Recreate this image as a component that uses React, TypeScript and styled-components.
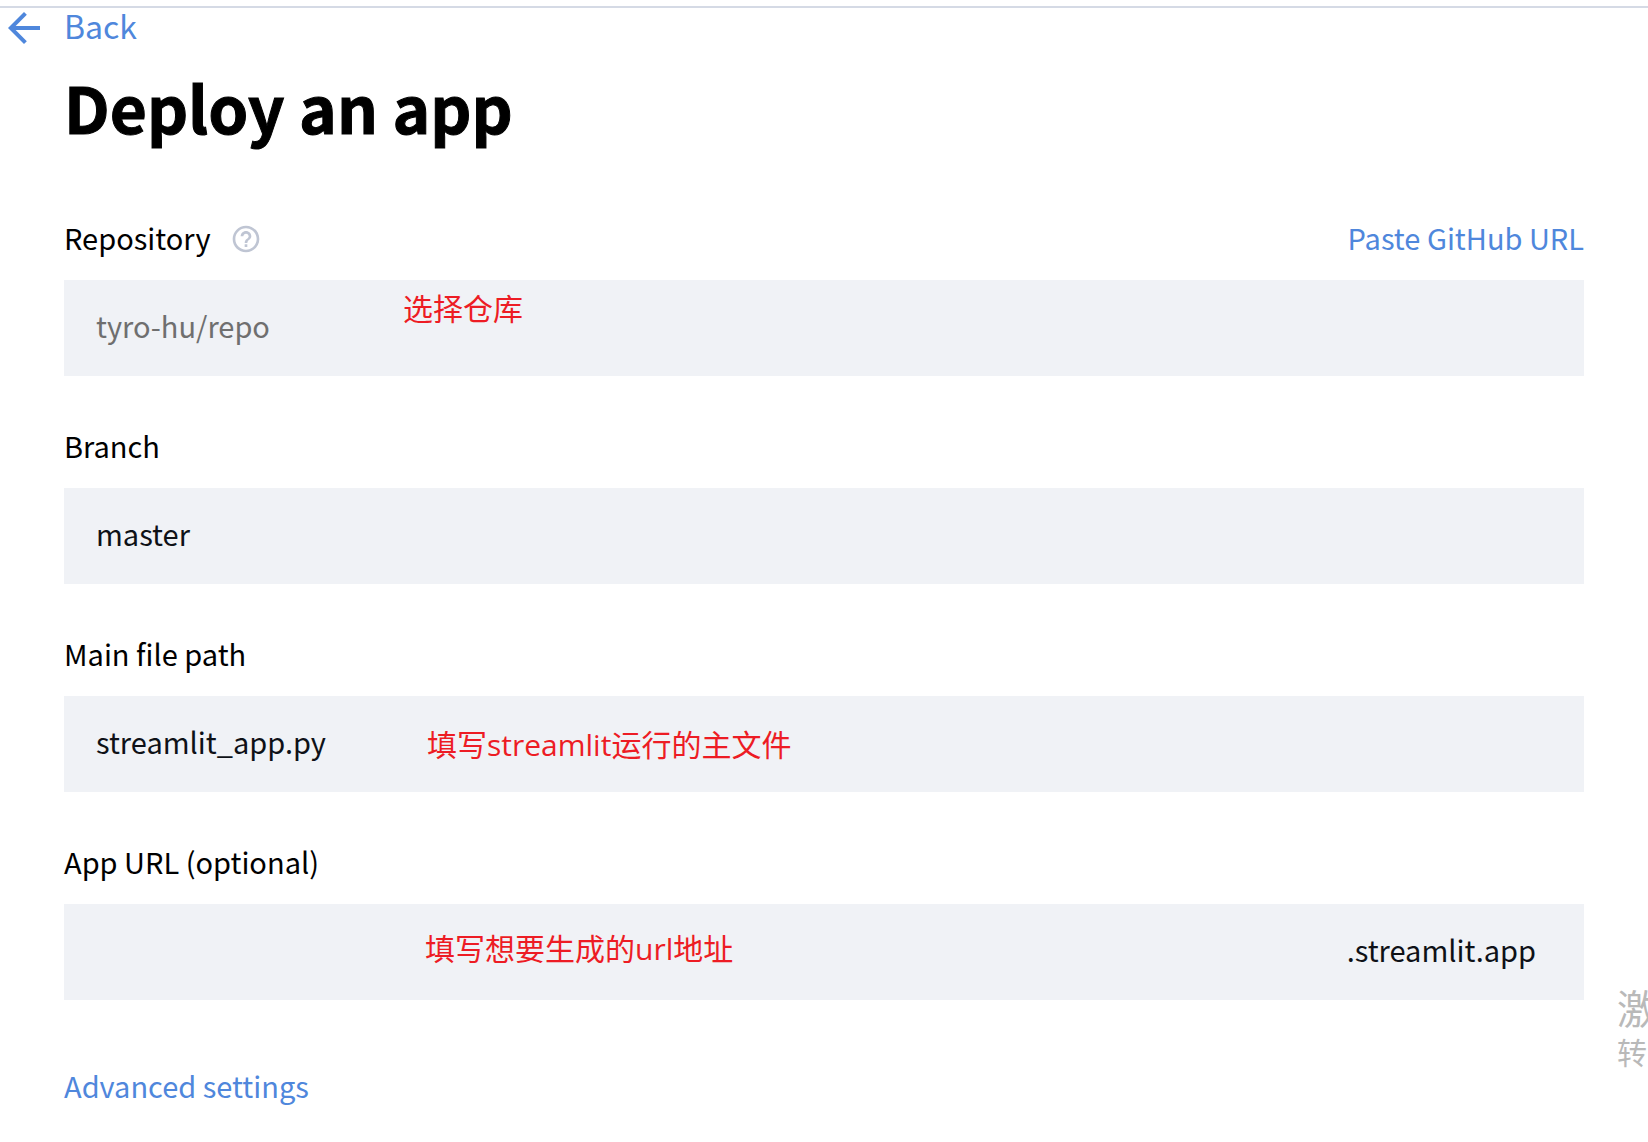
import React from 'react';
import styled, { createGlobalStyle } from 'styled-components';

const latin = `"Noto Sans CJK SC", "Source Sans Pro", sans-serif`;
const handNote = `"Open Sans", "Noto Sans CJK SC", sans-serif`;
const blue = '#4f87dc';

const GlobalStyle = createGlobalStyle`
  *, *::before, *::after { box-sizing: border-box; }
  body { margin: 0; background: #fff; color: #000; font-family: ${latin}; }
`;

const Page = styled.div`
  position: relative;
  min-height: 100vh;
  padding-top: 6px;
  overflow: hidden;
`;

const TopBar = styled.nav`
  display: flex;
  border-top: 2px solid #d5dae5;
  padding-left: 8px;
`;

const BackLink = styled.a`
  display: flex;
  align-items: flex-start;
  gap: 24px;
  height: 36px;
  color: ${blue};
  font-size: 32px;
  line-height: 34px;
  text-decoration: none;

  svg { align-self: flex-end; width: 32px; height: 32px; }
`;

const Content = styled.main`
  padding: 0 64px;
`;

const Title = styled.h1`
  margin: 22px 0 73px;
  font-size: 64px;
  line-height: 80px;
  font-weight: 700;
  -webkit-text-stroke: 1px currentColor;
`;

const Form = styled.form`
  display: flex;
  flex-direction: column;
  gap: 51px;
`;

const Field = styled.div`
  position: relative;
  display: flex;
  flex-direction: column;
  gap: 25px;
`;

const LabelRow = styled.div`
  display: flex;
  align-items: center;
  height: 36px;
  font-size: 29px;
  line-height: 36px;
`;

const HelpButton = styled.button`
  display: flex;
  margin: 4px auto 0 19px;
  padding: 0;
  border: 0;
  background: none;
  color: #bfc5d3;

  svg { width: 32px; height: 32px; }
`;

const TextLink = styled.a`
  color: ${blue};
  font-size: 29px;
  line-height: 36px;
  text-decoration: none;
`;

const InputBox = styled.div`
  display: flex;
  align-items: center;
  height: 96px;
  padding: 0 48px 6px 32px;
  background: #f0f2f6;
  color: #0e1117;
  font-size: 29px;
  line-height: 44px;
`;

const Input = styled.input`
  flex: 1;
  min-width: 0;
  height: 44px;
  padding: 0;
  border: 0;
  outline: 0;
  background: transparent;
  color: inherit;
  font: inherit;

  &::placeholder { color: #6f6f6f; opacity: 1; }
`;

const Note = styled.span<{ $left: number; $top: number }>`
  position: absolute;
  left: ${(p) => p.$left}px;
  top: ${(p) => p.$top}px;
  color: #ed1c24;
  font-family: ${handNote};
  font-size: 30px;
  line-height: 40px;
  white-space: nowrap;
  pointer-events: none;
`;

const Footer = styled.div`
  display: flex;
  padding-top: 67px;
`;

const Watermark = styled.div`
  position: absolute;
  left: calc(100% - 31px);
  top: 983px;
  color: #b9b9b9;
  white-space: nowrap;
  pointer-events: none;
`;

const WatermarkTitle = styled.div`
  font-size: 40px;
  line-height: 48px;
`;

const WatermarkText = styled.div`
  font-size: 30px;
  line-height: 40px;
`;

type FieldProps = {
  id: string;
  label: string;
  value?: string;
  placeholder?: string;
  suffix?: string;
  note?: { text: string; left: number; top: number };
  children?: React.ReactNode;
};

function TextField({ id, label, value, placeholder, suffix, note, children }: FieldProps) {
  return (
    <Field>
      <LabelRow>
        <label htmlFor={id}>{label}</label>
        {children}
      </LabelRow>
      <InputBox>
        <Input id={id} type="text" defaultValue={value} placeholder={placeholder} />
        {suffix && <span>{suffix}</span>}
      </InputBox>
      {note && <Note $left={note.left} $top={note.top}>{note.text}</Note>}
    </Field>
  );
}

export default function App() {
  return (
    <Page>
      <GlobalStyle />
      <TopBar>
        <BackLink href="#">
          <svg viewBox="4 4 16 16" fill="currentColor" aria-hidden="true">
            <path d="M20 11H7.83l5.59-5.59L12 4l-8 8 8 8 1.41-1.41L7.83 13H20v-2z" />
          </svg>
          Back
        </BackLink>
      </TopBar>
      <Content>
        <Title>Deploy an app</Title>
        <Form>
          <TextField
            id="repository"
            label="Repository"
            placeholder="tyro-hu/repo"
            note={{ text: '选择仓库', left: 339, top: 70 }}
          >
            <HelpButton type="button" aria-label="Help">
              <svg viewBox="0 0 24 24" fill="currentColor" aria-hidden="true">
                <path d="M11 18h2v-2h-2v2zm1-16C6.48 2 2 6.48 2 12s4.48 10 10 10 10-4.48 10-10S17.52 2 12 2zm0 18c-4.41 0-8-3.59-8-8s3.59-8 8-8 8 3.59 8 8-3.59 8-8 8zm0-14c-2.21 0-4 1.79-4 4h2c0-1.1.9-2 2-2s2 .9 2 2c0 2-3 1.75-3 5h2c0-2.25 3-2.5 3-5 0-2.21-1.79-4-4-4z" />
              </svg>
            </HelpButton>
            <TextLink href="#">Paste GitHub URL</TextLink>
          </TextField>
          <TextField id="branch" label="Branch" value="master" />
          <TextField
            id="main-file"
            label="Main file path"
            value="streamlit_app.py"
            note={{ text: '填写streamlit运行的主文件', left: 363, top: 90 }}
          />
          <TextField
            id="app-url"
            label="App URL (optional)"
            suffix=".streamlit.app"
            note={{ text: '填写想要生成的url地址', left: 361, top: 86 }}
          />
        </Form>
        <Footer>
          <TextLink href="#">Advanced settings</TextLink>
        </Footer>
      </Content>
      <Watermark>
        <WatermarkTitle>激</WatermarkTitle>
        <WatermarkText>转</WatermarkText>
      </Watermark>
    </Page>
  );
}
